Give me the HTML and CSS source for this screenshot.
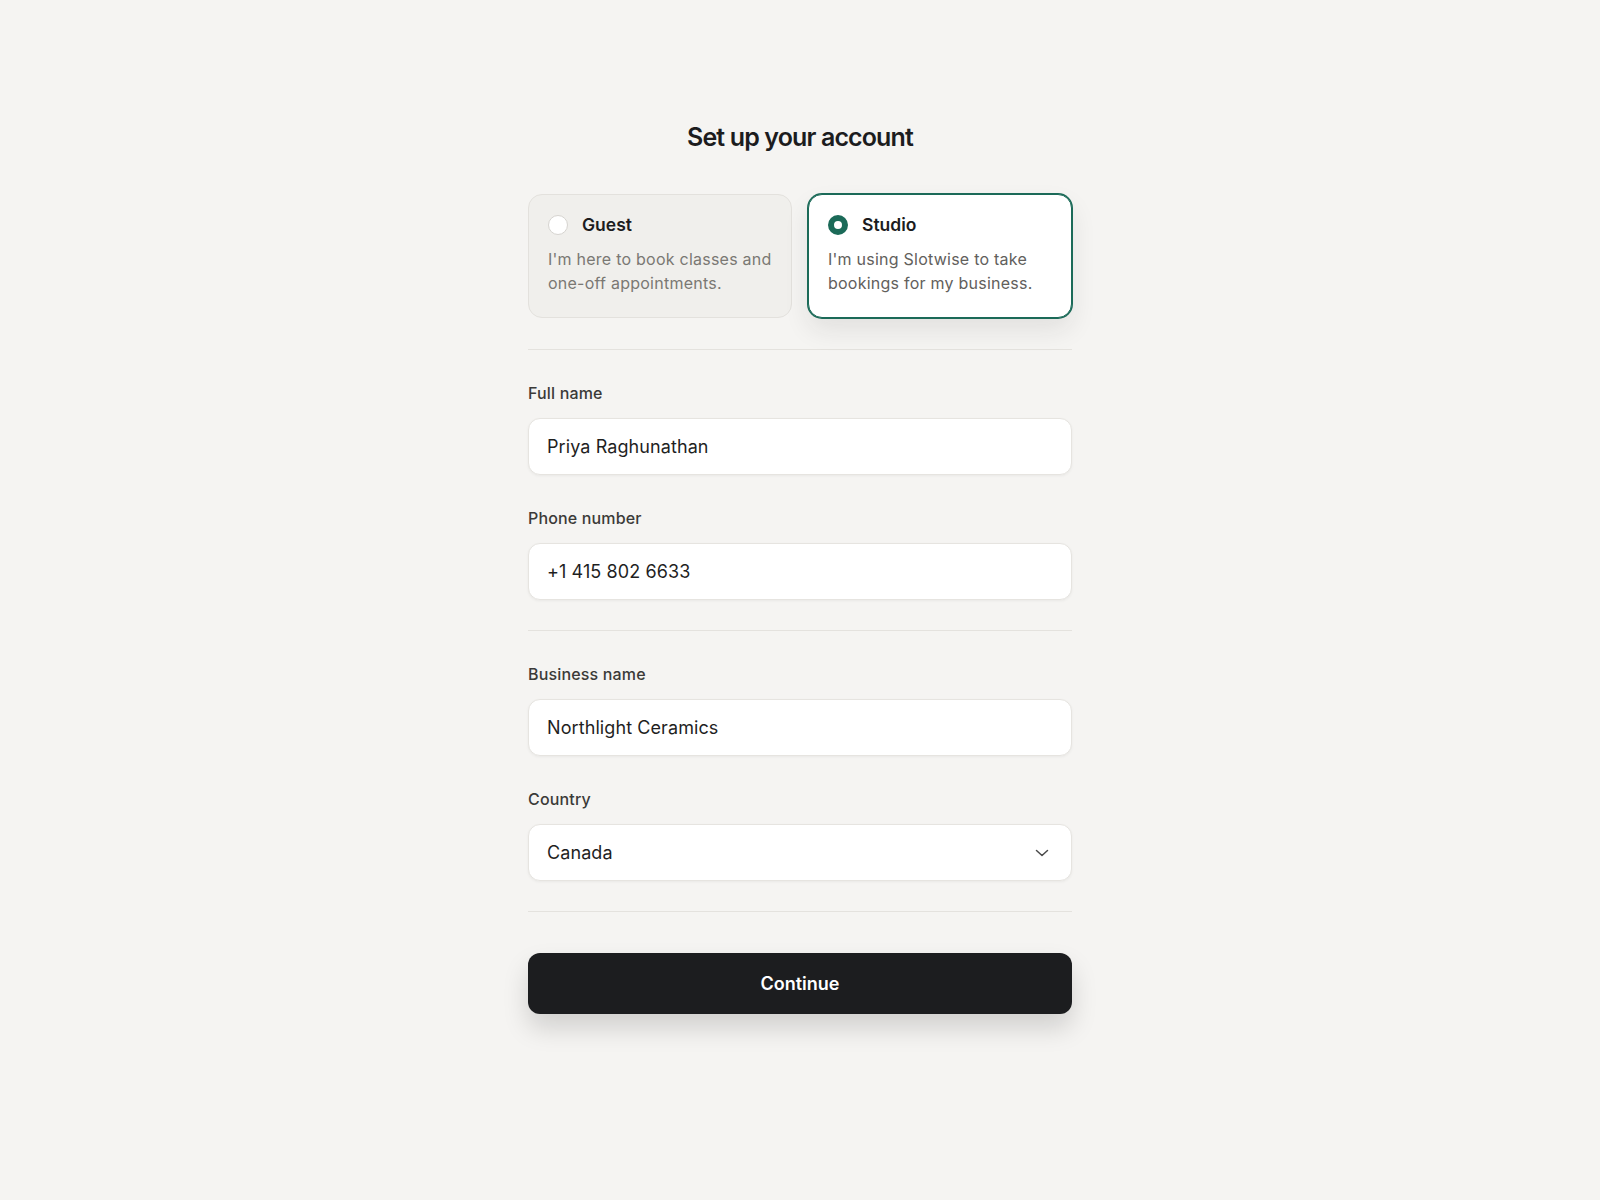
FILE: index.html
```html
<!DOCTYPE html>
<html lang="en">
<head>
<meta charset="utf-8">
<title>Set up your account</title>
<link rel="stylesheet" href="styles.css">
</head>
<body>
<main class="page">
  <h1 class="title">Set up your account</h1>

  <div class="roles">
    <label class="role">
      <div class="role-head">
        <span class="radio"></span>
        <span class="role-name">Guest</span>
      </div>
      <p class="role-desc">I'm here to book classes and one-off appointments.</p>
    </label>
    <label class="role role--selected">
      <div class="role-head">
        <span class="radio radio--on"></span>
        <span class="role-name">Studio</span>
      </div>
      <p class="role-desc">I'm using Slotwise to take bookings for my business.</p>
    </label>
  </div>

  <hr class="divider divider--first">

  <section class="fields">
    <div class="field">
      <label class="field-label" for="name">Full name</label>
      <input class="input" id="name" type="text" value="Priya Raghunathan">
    </div>
    <div class="field">
      <label class="field-label" for="phone">Phone number</label>
      <input class="input" id="phone" type="text" value="+1 415 802 6633">
    </div>
  </section>

  <hr class="divider divider--mid">

  <section class="fields">
    <div class="field">
      <label class="field-label" for="biz">Business name</label>
      <input class="input" id="biz" type="text" value="Northlight Ceramics">
    </div>
    <div class="field">
      <span class="field-label">Country</span>
      <div class="input select">
        <span>Canada</span>
        <svg class="chevron" width="14" height="8" viewBox="0 0 14 8" aria-hidden="true">
          <path d="M1.5 1.5 L7 6.5 L12.5 1.5" fill="none" stroke="#4a4a4a" stroke-width="1.5" stroke-linecap="round" stroke-linejoin="round"/>
        </svg>
      </div>
    </div>
  </section>

  <hr class="divider divider--last">

  <button class="continue" type="button">Continue</button>
</main>
</body>
</html>
```

FILE: styles.css
```css
* { box-sizing: border-box; }

html, body {
  margin: 0;
  background: #f5f4f2;
}

body {
  font-family: "Inter", "Noto Sans", "Liberation Sans", sans-serif;
  color: #1c1c1e;
}

.page {
  width: 544px;
  margin: 0 auto;
  padding-top: 121px;
  padding-bottom: 80px;
}

.title {
  margin: 0 0 41px;
  text-align: center;
  font-size: 25px;
  line-height: 32px;
  font-weight: 600;
  letter-spacing: -0.035em;
  color: #1c1c1e;
}

.roles {
  display: grid;
  grid-template-columns: 1fr 1fr;
  gap: 16px;
}

.role {
  display: block;
  border: 1px solid #e3e1dd;
  background: #f0efec;
  border-radius: 14px;
  padding: 20px 12px 22px 19px;
  cursor: pointer;
}

.role--selected {
  background: #ffffff;
  border-color: #1b6a58;
  box-shadow: 0 0 0 1px #1b6a58, 0 12px 26px rgba(30, 30, 30, 0.09);
}

.role-head {
  display: flex;
  align-items: center;
  gap: 14px;
  height: 20px;
  margin-bottom: 12px;
}

.radio {
  width: 20px;
  height: 20px;
  border-radius: 50%;
  background: #ffffff;
  border: 1px solid #d6d4d0;
  flex: none;
}

.radio--on {
  background: #ffffff;
  border: 6.5px solid #1b6a58;
}

.role-name {
  font-size: 17.5px;
  line-height: 20px;
  font-weight: 600;
  color: #1c1c1e;
}

.role-desc {
  margin: 0;
  font-size: 16px;
  line-height: 24px;
  letter-spacing: 0.015em;
  color: #7a7873;
}

.role--selected .role-desc {
  color: #62605c;
}

.divider {
  border: 0;
  height: 1px;
  background: #e4e2de;
  margin: 32px 0 32px;
}

.divider--first {
  margin-top: 31px;
  margin-bottom: 32px;
}

.divider--mid {
  margin-top: 30px;
  margin-bottom: 32px;
}

.fields {
  display: flex;
  flex-direction: column;
  gap: 32px;
}

.field {
  display: flex;
  flex-direction: column;
}

.field-label {
  display: block;
  font-size: 16px;
  line-height: 22px;
  font-weight: 500;
  letter-spacing: 0.01em;
  color: #3b3a38;
  margin-bottom: 14px;
}

.input {
  display: block;
  width: 100%;
  height: 57px;
  border: 1px solid #e6e4e0;
  border-radius: 12px;
  background: #ffffff;
  box-shadow: 0 1px 3px rgba(0, 0, 0, 0.05);
  padding: 0 18px;
  font-family: "Inter", "Noto Sans", "Liberation Sans", sans-serif;
  font-size: 18px;
  letter-spacing: 0.005em;
  color: #1f1f1f;
  outline: none;
}

.select {
  display: flex;
  align-items: center;
  justify-content: space-between;
  padding-right: 22px;
}

.chevron {
  display: block;
}

.divider--last {
  margin-top: 30px;
  margin-bottom: 41px;
}

.continue {
  display: block;
  width: 100%;
  height: 61px;
  border: 0;
  border-radius: 12px;
  background: #1c1d1f;
  color: #ffffff;
  font-family: "Inter", "Noto Sans", "Liberation Sans", sans-serif;
  font-size: 18px;
  font-weight: 600;
  box-shadow: 0 14px 26px rgba(0, 0, 0, 0.15);
  cursor: pointer;
}
```
